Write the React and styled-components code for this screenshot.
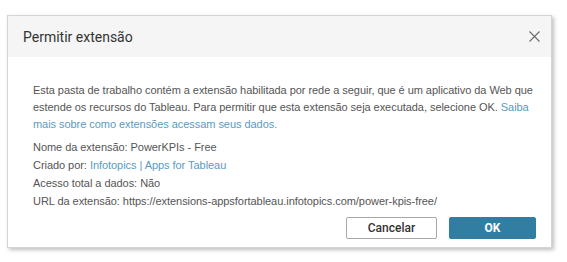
import React from "react";
import styled, { createGlobalStyle } from "styled-components";

const GlobalStyle = createGlobalStyle`
  html, body {
    margin: 0;
    padding: 0;
    background: #ffffff;
  }
  body {
    font-family: "Liberation Sans", Arial, sans-serif;
  }
`;

const Page = styled.div`
  width: 567px;
  height: 262px;
  padding: 15px 0 0 7px;
  box-sizing: border-box;
`;

const Dialog = styled.div`
  width: 545px;
  height: 233px;
  box-sizing: border-box;
  border: 1px solid #d4d4d4;
  background: #fff;
  box-shadow: 2px 2px 4px rgba(0, 0, 0, 0.25);
  display: flex;
  flex-direction: column;
`;

const Header = styled.div`
  height: 41px;
  background: #f5f5f5;
  display: flex;
  align-items: center;
  justify-content: space-between;
  padding: 0 10px 0 15px;
  flex-shrink: 0;
`;

const Title = styled.h1`
  margin: 0;
  font-family: Roboto, "Liberation Sans", sans-serif;
  font-weight: 400;
  font-size: 14px;
  color: #333;
`;

const CloseButton = styled.button`
  width: 14px;
  height: 14px;
  border: 0;
  padding: 0;
  background: transparent;
  display: flex;
  align-items: center;
  justify-content: center;
  cursor: pointer;
`;

const Body = styled.div`
  flex: 1;
  padding: 25px 8px 0 25px;
  font-size: 11px;
  letter-spacing: -0.05px;
  color: #555;
  display: flex;
  flex-direction: column;
`;

const Paragraph = styled.p`
  margin: 0 0 5px;
  line-height: 17px;
`;

const InfoLine = styled.div`
  line-height: 18px;
`;

const Link = styled.a`
  color: #5a9bbf;
  text-decoration: none;
`;

const Footer = styled.div`
  display: flex;
  justify-content: flex-end;
  gap: 12px;
  padding: 7px 7px 0 0;
`;

const Button = styled.button`
  width: ${(p) => (p.$primary ? "87px" : "91px")};
  height: 22px;
  box-sizing: border-box;
  border-radius: 2px;
  font-family: Roboto, "Liberation Sans", sans-serif;
  font-size: 12px;
  font-weight: ${(p) => (p.$primary ? 700 : 500)};
  color: ${(p) => (p.$primary ? "#fff" : "#333")};
  background: ${(p) => (p.$primary ? "#327ea2" : "#fff")};
  border: 1px solid ${(p) => (p.$primary ? "#327ea2" : "#a8a8a8")};
  cursor: pointer;
`;

export default function App() {
  return (
    <>
      <GlobalStyle />
      <Page>
        <Dialog>
          <Header>
            <Title>Permitir extensão</Title>
            <CloseButton aria-label="Fechar">
              <svg width="11" height="11" viewBox="0 0 11 11">
                <path d="M0.5 0.5L10.5 10.5M10.5 0.5L0.5 10.5" stroke="#6b6b6b" strokeWidth="1.1" fill="none" />
              </svg>
            </CloseButton>
          </Header>
          <Body>
            <Paragraph>
              Esta pasta de trabalho contém a extensão habilitada por rede a seguir, que é um aplicativo da Web que
              estende os recursos do Tableau. Para permitir que esta extensão seja executada, selecione OK.{" "}
              <Link href="#">Saiba mais sobre como extensões acessam seus dados.</Link>
            </Paragraph>
            <InfoLine>Nome da extensão: PowerKPIs - Free</InfoLine>
            <InfoLine>
              Criado por: <Link href="#">Infotopics | Apps for Tableau</Link>
            </InfoLine>
            <InfoLine>Acesso total a dados: Não</InfoLine>
            <InfoLine>URL da extensão: https://extensions-appsfortableau.infotopics.com/power-kpis-free/</InfoLine>
            <Footer>
              <Button>Cancelar</Button>
              <Button $primary>OK</Button>
            </Footer>
          </Body>
        </Dialog>
      </Page>
    </>
  );
}
